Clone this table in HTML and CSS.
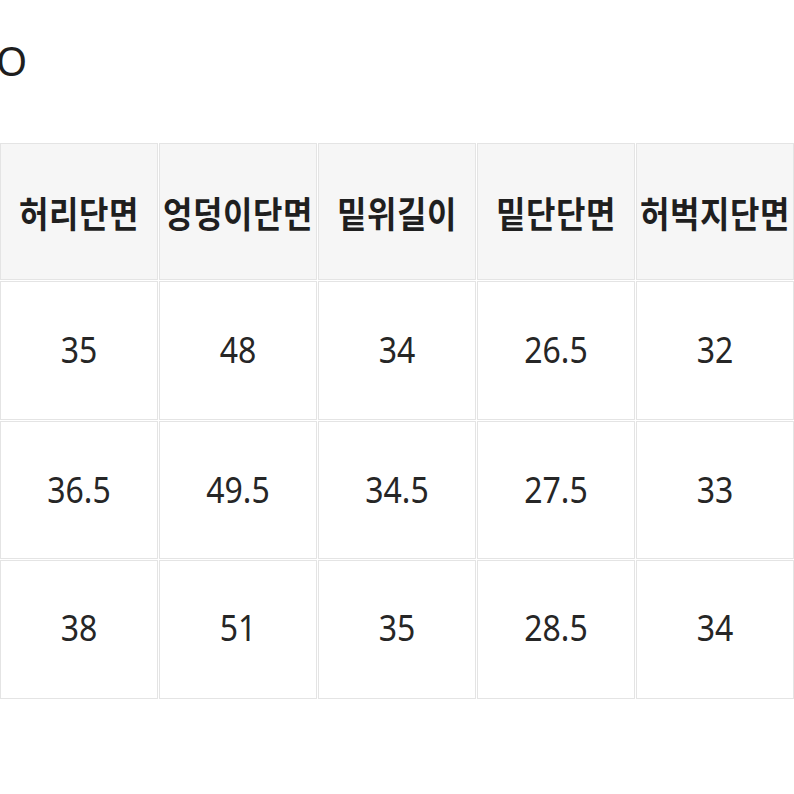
FILE: index.html
```html
<!DOCTYPE html>
<html lang="ko">
<head>
<meta charset="utf-8">
<link rel="stylesheet" href="styles.css">
</head>
<body>
<div class="page">
  <p class="title">O</p>
  <table class="size-table">
    <thead>
      <tr>
        <th><span class="txt">허리단면</span></th>
        <th><span class="txt">엉덩이단면</span></th>
        <th><span class="txt">밑위길이</span></th>
        <th><span class="txt">밑단단면</span></th>
        <th><span class="txt">허벅지단면</span></th>
      </tr>
    </thead>
    <tbody>
      <tr><td><span class="txt">35</span></td><td><span class="txt">48</span></td><td><span class="txt">34</span></td><td><span class="txt">26.5</span></td><td><span class="txt">32</span></td></tr>
      <tr><td><span class="txt">36.5</span></td><td><span class="txt">49.5</span></td><td><span class="txt">34.5</span></td><td><span class="txt">27.5</span></td><td><span class="txt">33</span></td></tr>
      <tr><td><span class="txt">38</span></td><td><span class="txt">51</span></td><td><span class="txt">35</span></td><td><span class="txt">28.5</span></td><td><span class="txt">34</span></td></tr>
    </tbody>
  </table>
</div>
</body>
</html>
```

FILE: styles.css
```css
html, body {
  margin: 0;
  padding: 0;
  background: #ffffff;
}

.page {
  width: 794px;
  overflow: hidden;
  font-family: "Noto Sans", "Noto Sans CJK KR", sans-serif;
  color: #222222;
}

.title {
  margin: 0 0 0 -4px;
  padding-top: 34px;
  height: 108px;
  font-size: 40px;
  line-height: 54px;
  font-weight: 400;
  color: #1e1e1e;
}

.size-table {
  width: 796px;
  margin-left: -1px;
  border-collapse: separate;
  border-spacing: 1px;
  table-layout: fixed;
}

.size-table th,
.size-table td {
  border: 1px solid #e4e4e4;
  padding: 0;
  text-align: center;
  vertical-align: middle;
}

.size-table th {
  height: 135px;
  background: #f6f6f6;
  font-family: "Noto Sans CJK KR", sans-serif;
  font-weight: 700;
  font-size: 32px;
  letter-spacing: 0.6px;
  white-space: nowrap;
  color: #1f1f1f;
}

.size-table td {
  height: 133.5px;
  padding-bottom: 3px;
  background: #ffffff;
  font-family: "Noto Sans", "Noto Sans CJK KR", sans-serif;
  font-size: 32px;
  font-weight: 400;
  color: #262626;
}

.txt {
  display: inline-block;
  transform: scaleY(1.12);
}
```
